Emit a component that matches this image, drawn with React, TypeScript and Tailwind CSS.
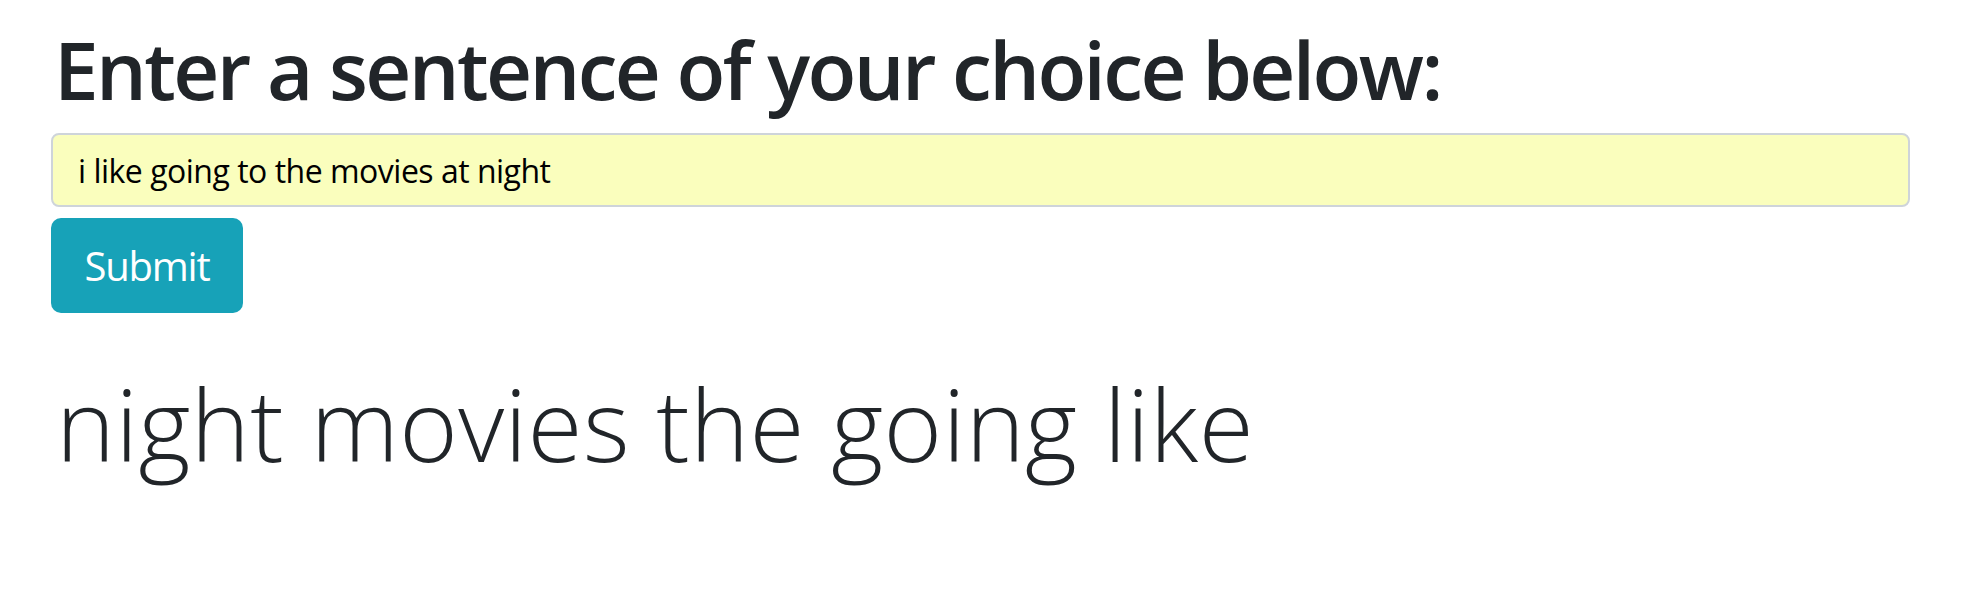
import React from 'react';

export default function App() {
    return (
        <div className="min-h-screen bg-white pl-[51px] pr-[69px] pt-[21px] text-[#212529] font-['Open_Sans',sans-serif]">
            <h1 className="text-[80px] leading-[96px] font-semibold tracking-[-2.6px] mb-[16px] pl-[3px]">
                Enter a sentence of your choice below:
            </h1>

            <input
                type="text"
                defaultValue="i like going to the movies at night"
                className="block w-full h-[74px] bg-[#fafebd] border-2 border-[#ced4da] rounded-lg px-[25px] text-[32px] text-black tracking-[-0.5px] outline-none"
            />

            <button className="mt-[11px] h-[95px] w-[192px] bg-[#17a2b8] text-white text-[40px] tracking-[-1.2px] rounded-[10px]">
                Submit
            </button>

            <div className="mt-[53px] pl-[5px] text-[100px] leading-[115px] font-[350] tracking-[0.4px]">
                night movies the going like
            </div>
        </div>
    );
}
